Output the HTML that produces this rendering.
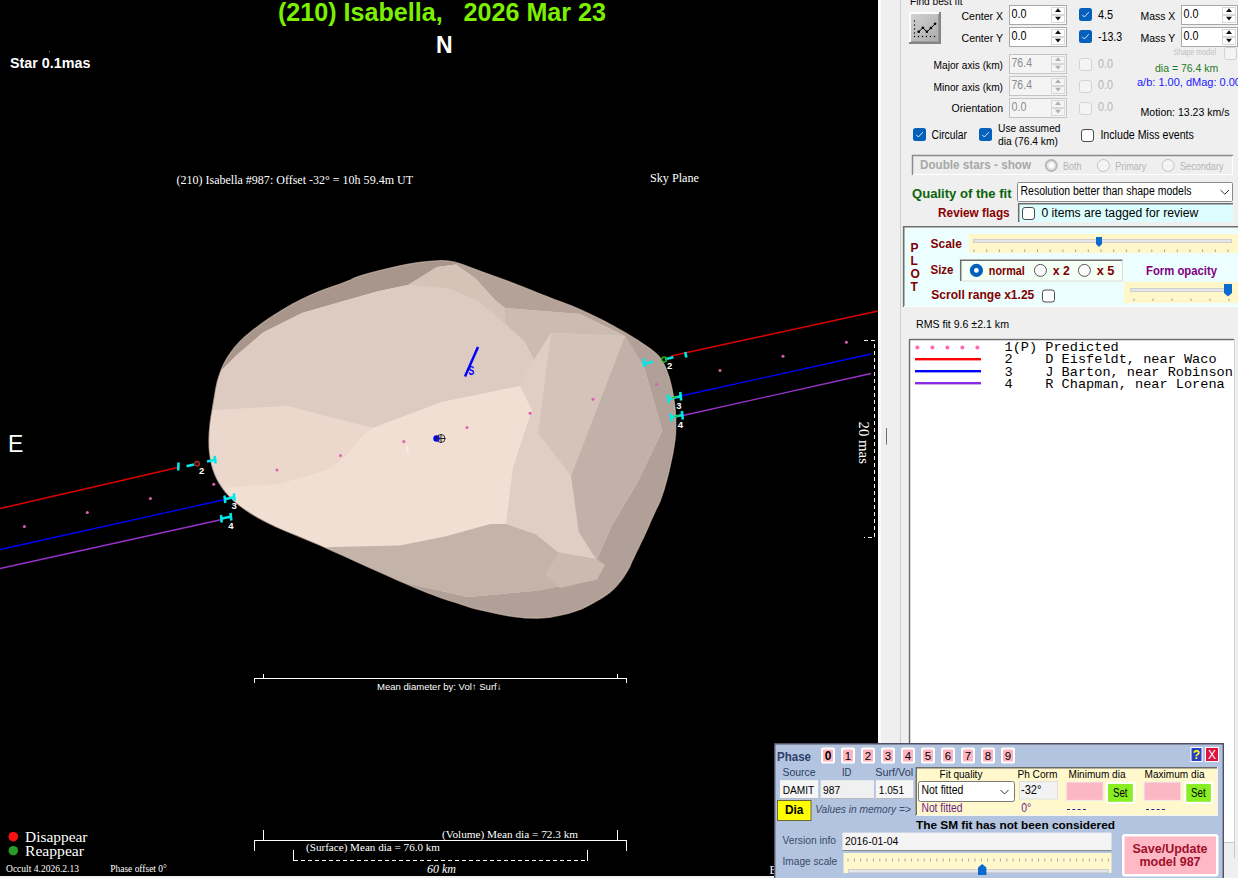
<!DOCTYPE html>
<html><head><meta charset="utf-8">
<style>
html,body{margin:0;padding:0;background:#000;width:1238px;height:878px;overflow:hidden}
svg{position:absolute;left:0;top:0;display:block}
text{font-family:"Liberation Sans",sans-serif}
.sf{font-family:"Liberation Serif",serif}
.mo{font-family:"Liberation Mono",monospace}
</style></head><body>
<svg width="1238" height="878" viewBox="0 0 1238 878">
<rect x="0" y="0" width="878" height="876" fill="#000"/>
<rect x="0" y="876" width="878" height="2" fill="#f2f2f2"/>
<g id="asteroid">
<polygon fill="#a69489" points="446.0,260.2 450.0,260.8 454.2,261.6 458.8,262.8 463.5,264.3 468.5,266.2 474.7,268.5 482.0,271.2 490.4,274.2 500.1,277.8 509.7,281.3 519.3,285.0 528.9,288.8 538.6,292.7 547.1,296.1 554.5,298.9 560.9,301.3 566.1,303.2 572.2,305.6 579.1,308.5 586.8,312.0 595.2,316.0 603.4,320.1 611.3,324.2 618.9,328.4 626.1,332.6 632.6,336.5 638.4,340.1 643.4,343.4 647.6,346.2 651.4,349.0 654.6,351.6 657.4,354.0 659.6,356.3 661.8,359.3 663.9,362.9 666.0,367.3 668.0,372.4 669.8,377.8 671.3,383.4 672.7,389.4 673.8,395.6 674.7,401.3 675.4,406.4 675.9,411.0 676.1,415.0 676.3,419.2 676.3,423.6 676.3,428.1 676.2,432.9 675.7,438.5 674.8,445.0 673.6,452.4 671.9,460.6 670.2,468.5 668.4,476.0 666.5,483.1 664.5,489.9 662.6,495.8 660.7,500.9 658.9,505.2 657.1,508.8 655.2,512.8 653.2,517.2 650.9,522.2 648.6,527.8 646.2,533.1 643.8,538.2 641.4,543.1 639.1,547.9 636.8,552.6 634.5,557.4 632.3,562.1 630.2,566.9 627.7,571.6 624.8,576.2 621.6,580.8 617.9,585.2 614.1,589.3 610.0,592.9 605.8,596.1 601.2,598.9 596.7,601.6 592.0,604.2 587.2,606.8 582.3,609.2 576.0,611.6 568.3,613.9 559.2,616.0 548.8,618.0 537.4,618.8 525.3,618.5 512.4,617.1 498.6,614.4 487.2,612.1 478.1,610.0 471.2,608.3 466.8,606.8 461.5,605.1 455.5,603.1 448.8,600.9 441.2,598.4 434.1,595.8 427.2,593.2 420.6,590.6 414.4,588.0 406.9,584.7 398.1,580.9 388.1,576.5 376.9,571.5 365.6,566.4 354.2,561.3 342.8,556.1 331.2,550.9 319.8,545.8 308.3,540.9 296.9,536.2 285.5,531.6 275.1,527.1 265.7,522.5 257.3,518.0 249.8,513.4 243.3,509.0 237.6,504.7 232.7,500.6 228.8,496.6 225.1,492.5 221.9,488.2 218.9,483.8 216.4,479.2 214.2,474.4 212.3,469.3 210.8,463.9 209.7,458.1 208.9,452.3 208.5,446.4 208.4,440.4 208.6,434.2 209.0,428.4 209.6,422.8 210.3,417.5 211.2,412.5 212.1,407.0 213.1,401.1 214.2,394.7 215.3,387.9 216.8,381.3 218.7,375.0 220.9,369.1 223.4,363.4 226.5,357.8 230.1,352.4 234.2,347.1 238.7,342.0 244.3,336.6 250.9,331.0 258.5,325.2 267.1,319.1 275.7,313.4 284.2,308.2 292.8,303.3 301.2,298.9 309.6,294.9 317.7,291.4 325.6,288.4 333.4,285.8 340.1,283.5 345.8,281.3 350.4,279.4 354.1,277.6 359.6,275.6 367.1,273.3 376.6,270.8 387.9,267.9 398.7,265.6 408.7,263.6 418.1,262.1 426.9,261.1 434.4,260.4 440.8,260.1"/>
<polygon fill="#e9d5c9" points="445.9,261.2 440.8,261.1 434.5,261.4 427.0,262.1 418.3,263.1 408.9,264.6 398.9,266.5 388.2,268.9 376.8,271.7 367.4,274.3 359.9,276.6 354.4,278.5 350.9,280.3 346.1,282.2 340.4,284.4 333.7,286.8 326.0,289.3 318.1,292.3 310.0,295.8 301.7,299.8 293.2,304.2 284.7,309.0 276.2,314.3 267.7,319.9 259.1,326.0 251.5,331.8 245.0,337.4 239.5,342.7 234.9,347.7 230.9,353.0 227.4,358.3 224.3,363.8 221.8,369.4 219.6,375.4 217.8,381.6 216.3,388.1 215.2,394.9 214.1,401.3 213.1,407.2 212.2,412.7 211.3,417.7 210.6,422.9 210.0,428.4 209.6,434.3 209.4,440.4 209.5,446.4 209.9,452.2 210.7,458.0 211.8,463.6 213.3,469.0 215.1,474.0 217.3,478.8 219.8,483.2 222.7,487.6 225.9,491.8 229.5,495.9 233.4,499.9 238.2,504.0 243.8,508.2 250.4,512.6 257.8,517.1 266.1,521.6 275.5,526.2 285.9,530.7 297.3,535.2 308.7,540.0 320.2,544.9 331.7,550.0 343.2,555.2 354.6,560.4 366.0,565.5 377.3,570.6 388.5,575.6 398.5,580.0 407.3,583.8 414.8,587.1 421.0,589.7 427.6,592.3 434.4,594.9 441.6,597.4 449.1,599.9 455.8,602.1 461.8,604.1 467.1,605.9 471.5,607.3 478.3,609.1 487.4,611.1 498.8,613.5 512.5,616.1 525.4,617.5 537.4,617.8 548.6,617.0 559.0,615.0 568.1,612.9 575.7,610.7 581.9,608.3 586.7,605.9 591.5,603.3 596.2,600.7 600.7,598.0 605.2,595.3 609.4,592.2 613.4,588.6 617.2,584.6 620.8,580.1 624.0,575.6 626.8,571.1 629.3,566.4 631.4,561.7 633.6,557.0 635.8,552.2 638.2,547.4 640.5,542.7 642.9,537.8 645.3,532.6 647.6,527.3 650.0,521.8 652.2,516.8 654.3,512.3 656.2,508.3 658.0,504.8 659.8,500.6 661.6,495.5 663.5,489.6 665.5,482.8 667.4,475.8 669.2,468.3 671.0,460.4 672.6,452.2 673.8,444.8 674.7,438.4 675.2,432.8 675.3,428.1 675.3,423.6 675.3,419.2 675.1,415.0 674.9,411.1 674.4,406.6 673.7,401.5 672.8,395.8 671.7,389.6 670.4,383.7 668.8,378.1 667.1,372.7 665.1,367.7 663.1,363.4 661.0,359.8 658.9,356.9 656.7,354.7 654.0,352.3 650.8,349.8 647.0,347.1 642.8,344.2 637.8,341.0 632.1,337.4 625.6,333.5 618.4,329.2 610.8,325.1 603.0,321.0 594.8,316.9 586.3,312.9 578.7,309.4 571.8,306.5 565.8,304.1 560.5,302.2 554.2,299.9 546.7,297.0 538.2,293.6 528.6,289.7 518.9,286.0 509.3,282.3 499.7,278.7 490.1,275.2 481.6,272.1 474.3,269.4 468.2,267.1 463.2,265.3 458.5,263.7 454.0,262.6 449.8,261.7"/>
<polygon fill="#a8968c" points="236.0,355.7 263.0,332.5 302.0,313.0 340.0,302.0 379.0,291.0 408.0,285.0 437.0,267.0 456.0,264.5 457.1,263.4 454.0,262.6 449.8,261.7 445.9,261.2 440.8,261.1 434.5,261.4 427.0,262.1 418.3,263.1 408.9,264.6 398.9,266.5 388.2,268.9 376.8,271.7 367.4,274.3 359.9,276.6 354.4,278.5 350.9,280.3 346.1,282.2 340.4,284.4 333.7,286.8 326.0,289.3 318.1,292.3 310.0,295.8 301.7,299.8 293.2,304.2 284.7,309.0 276.2,314.3 267.7,319.9 259.1,326.0 251.5,331.8 245.0,337.4 239.5,342.7 234.9,347.7 230.9,353.0 227.4,358.3 224.3,363.8 221.8,369.4 221.5,370.2"/>
<polygon fill="#b4a298" points="456.0,264.5 476.0,279.0 495.0,300.0 505.0,308.0 580.0,314.0 625.0,336.0 629.8,336.0 625.6,333.5 618.4,329.2 610.8,325.1 603.0,321.0 594.8,316.9 586.3,312.9 578.7,309.4 571.8,306.5 565.8,304.1 560.5,302.2 554.2,299.9 546.7,297.0 538.2,293.6 528.6,289.7 518.9,286.0 509.3,282.3 499.7,278.7 490.1,275.2 481.6,272.1 474.3,269.4 468.2,267.1 463.2,265.3 458.5,263.7 457.1,263.4"/>
<polygon fill="#b0a097" points="625.0,336.0 644.0,367.0 662.3,430.8 637.7,482.0 611.0,527.0 596.7,560.0 596.8,579.5 535.7,590.8 467.9,597.0 405.4,583.0 407.3,583.8 414.8,587.1 421.0,589.7 427.6,592.3 434.4,594.9 441.6,597.4 449.1,599.9 455.8,602.1 461.8,604.1 467.1,605.9 471.5,607.3 478.3,609.1 487.4,611.1 498.8,613.5 512.5,616.1 525.4,617.5 537.4,617.8 548.6,617.0 559.0,615.0 568.1,612.9 575.7,610.7 581.9,608.3 586.7,605.9 591.5,603.3 596.2,600.7 600.7,598.0 605.2,595.3 609.4,592.2 613.4,588.6 617.2,584.6 620.8,580.1 624.0,575.6 626.8,571.1 629.3,566.4 631.4,561.7 633.6,557.0 635.8,552.2 638.2,547.4 640.5,542.7 642.9,537.8 645.3,532.6 647.6,527.3 650.0,521.8 652.2,516.8 654.3,512.3 656.2,508.3 658.0,504.8 659.8,500.6 661.6,495.5 663.5,489.6 665.5,482.8 667.4,475.8 669.2,468.3 671.0,460.4 672.6,452.2 673.8,444.8 674.7,438.4 675.2,432.8 675.3,428.1 675.3,423.6 675.3,419.2 675.1,415.0 674.9,411.1 674.4,406.6 673.7,401.5 672.8,395.8 671.7,389.6 670.4,383.7 668.8,378.1 667.1,372.7 665.1,367.7 663.1,363.4 661.0,359.8 658.9,356.9 656.7,354.7 654.0,352.3 650.8,349.8 647.0,347.1 642.8,344.2 637.8,341.0 632.1,337.4 629.8,336.0"/>
<polygon fill="#d6c3b8" points="449.0,289.0 476.0,300.0 505.0,324.0 505.0,308.0 495.0,300.0 476.0,279.0 456.0,264.5 437.0,267.0 408.0,285.0"/>
<polygon fill="#cbbbb0" points="505.0,324.0 524.0,341.0 534.0,360.0 551.0,333.0 625.0,336.0 580.0,314.0 505.0,308.0"/>
<polygon fill="#ddcbc1" points="287.0,406.0 373.0,428.0 442.0,402.0 520.0,386.0 534.0,360.0 524.0,341.0 505.0,324.0 476.0,300.0 449.0,289.0 408.0,285.0 379.0,291.0 340.0,302.0 302.0,313.0 263.0,332.5 236.0,355.7 221.5,370.2 219.6,375.4 217.8,381.6 216.3,388.1 215.2,394.9 214.1,401.3 213.1,407.2 212.6,410.3"/>
<polygon fill="#ebd7cc" points="230.0,487.0 279.0,484.0 327.0,470.0 345.0,457.0 364.0,434.0 373.0,428.0 287.0,406.0 212.6,410.3 212.2,412.7 211.3,417.7 210.6,422.9 210.0,428.4 209.6,434.3 209.4,440.4 209.5,446.4 209.9,452.2 210.7,458.0 211.8,463.6 213.3,469.0 215.1,474.0 217.3,478.8 219.8,483.2 222.7,487.6 223.1,488.2"/>
<polygon fill="#f2dfd3" points="333.0,547.0 400.0,545.6 445.0,536.5 490.5,524.0 506.0,524.0 513.0,468.0 532.0,410.0 520.0,386.0 442.0,402.0 373.0,428.0 364.0,434.0 345.0,457.0 327.0,470.0 279.0,484.0 230.0,487.0 223.1,488.2 225.9,491.8 229.5,495.9 233.4,499.9 238.2,504.0 243.8,508.2 250.4,512.6 257.8,517.1 266.1,521.6 275.5,526.2 285.9,530.7 297.3,535.2 308.7,540.0 320.2,544.9 326.4,547.6"/>
<polygon fill="#e0cec4" points="532.0,410.0 513.0,468.0 506.0,524.0 535.7,534.3 558.3,552.4 596.8,559.2 578.7,532.0 571.0,476.0 538.0,433.0 551.0,333.0 534.0,360.0 520.0,386.0"/>
<polygon fill="#d5c3b9" points="538.0,433.0 571.0,476.0 586.0,437.0 625.0,336.0 551.0,333.0"/>
<polygon fill="#c2b1a8" points="586.0,437.0 571.0,476.0 578.7,532.0 596.7,560.0 611.0,527.0 637.7,482.0 662.3,430.8 644.0,367.0 625.0,336.0"/>
<polygon fill="#c4b3a9" points="467.9,597.0 535.7,590.8 596.8,579.5 605.0,565.0 596.8,559.2 558.3,552.4 535.7,534.3 506.0,524.0 490.5,524.0 445.0,536.5 400.0,545.6 333.0,547.0 326.4,547.6 331.7,550.0 343.2,555.2 354.6,560.4 366.0,565.5 377.3,570.6 388.5,575.6 398.5,580.0 405.4,583.0"/>
<polygon fill="#cbbab0" points="545.0,575.0 560.0,588.0 596.8,579.5 605.0,565.0 596.8,559.2 558.3,552.4"/>
</g>
<text x="278" y="21" font-size="25" fill="#7cf000" font-weight="bold" textLength="328" lengthAdjust="spacingAndGlyphs" xml:space="preserve">(210) Isabella,   2026 Mar 23</text>
<text x="436" y="53" font-size="23" fill="#fff" font-weight="bold" xml:space="preserve">N</text>
<text x="10" y="68" font-size="14.25" fill="#fff" font-weight="bold" textLength="80.5" lengthAdjust="spacingAndGlyphs" xml:space="preserve">Star 0.1mas</text>
<rect x="49" y="51" width="1" height="1" fill="#888"/>
<text x="8" y="452" font-size="23" fill="#fff" xml:space="preserve">E</text>
<text x="176.5" y="183.8" font-size="12" fill="#fff" class="sf" textLength="236.5" lengthAdjust="spacingAndGlyphs" xml:space="preserve">(210) Isabella #987: Offset -32° = 10h 59.4m UT</text>
<text x="650" y="182" font-size="12" fill="#fff" class="sf" textLength="49" lengthAdjust="spacingAndGlyphs" xml:space="preserve">Sky Plane</text>
<g id="chords">
<line x1="0" y1="508.5" x2="178" y2="467.5" stroke="#e00000" stroke-width="1.3"/>
<line x1="671" y1="356" x2="878" y2="311" stroke="#e00000" stroke-width="1.3"/>
<line x1="0" y1="549.5" x2="225" y2="499.5" stroke="#0000ff" stroke-width="1.3"/>
<line x1="681" y1="396" x2="871" y2="354" stroke="#0000ff" stroke-width="1.3"/>
<line x1="0" y1="568.5" x2="222" y2="519.5" stroke="#9932cc" stroke-width="1.3"/>
<line x1="683" y1="415.5" x2="871" y2="373.5" stroke="#9932cc" stroke-width="1.3"/>
<g fill="#e060b0"><circle cx="24.4" cy="526.5" r="1.5"/><circle cx="87.3" cy="512.4" r="1.5"/><circle cx="150.4" cy="498.5" r="1.5"/><circle cx="213.8" cy="484.3" r="1.5"/><circle cx="277" cy="470" r="1.5"/><circle cx="340.5" cy="455.5" r="1.5"/><circle cx="403.8" cy="441.5" r="1.5"/><circle cx="467" cy="427.6" r="1.5"/><circle cx="530" cy="413.2" r="1.5"/><circle cx="593" cy="399.2" r="1.5"/><circle cx="656.7" cy="384.5" r="1.5"/><circle cx="720" cy="370.5" r="1.5"/><circle cx="783" cy="356.3" r="1.5"/><circle cx="846.4" cy="342.3" r="1.5"/></g>
<g stroke="#00e8e8" stroke-width="2.6" stroke-linecap="butt">
<line x1="178.6" y1="462.5" x2="178.2" y2="470.5"/>
<line x1="186.5" y1="466.2" x2="194" y2="464.4"/>
<line x1="207" y1="461.6" x2="215" y2="459.8"/><line x1="214.6" y1="456" x2="215.6" y2="463.5"/>
<line x1="224.5" y1="499.3" x2="234.7" y2="497"/><line x1="224.5" y1="495.5" x2="225.3" y2="503"/><line x1="233.8" y1="493.5" x2="234.6" y2="501"/>
<line x1="221" y1="518.7" x2="231.3" y2="516.5"/><line x1="221" y1="515" x2="221.8" y2="522.5"/><line x1="230.5" y1="513" x2="231.3" y2="520.5"/>
<line x1="643.5" y1="364" x2="652.8" y2="361.8"/><line x1="643.4" y1="358.5" x2="644.4" y2="367"/>
<line x1="665" y1="359.3" x2="673.4" y2="357.2"/>
<line x1="685.3" y1="352" x2="686.3" y2="357.5"/>
<line x1="668" y1="398.9" x2="681" y2="396.2"/><line x1="668" y1="394.5" x2="669" y2="403"/><line x1="680.2" y1="392" x2="681.2" y2="400.5"/>
<line x1="670.7" y1="417.6" x2="682.6" y2="415.1"/><line x1="670.7" y1="413.5" x2="671.7" y2="421.5"/><line x1="681.8" y1="411" x2="682.8" y2="419.5"/>
</g>
<g stroke="#30c030" stroke-width="1.6"><line x1="672" y1="397.8" x2="677" y2="396.8"/><line x1="674.5" y1="416.7" x2="679" y2="415.8"/></g>
<circle cx="197.1" cy="463.8" r="2.3" fill="none" stroke="#b03020" stroke-width="1.3"/>
<circle cx="664.2" cy="359.5" r="2.4" fill="none" stroke="#20b020" stroke-width="1.5"/>
<g fill="#fff" font-size="9.5" font-weight="bold">
<text x="199" y="474">2</text><text x="231.6" y="509.4">3</text><text x="228.2" y="528.8">4</text>
<text x="667" y="368.6">2</text><text x="676.2" y="408.6">3</text><text x="677.8" y="427.6">4</text>
</g>
<line x1="478" y1="347" x2="465" y2="376.5" stroke="#0000ff" stroke-width="2.5"/>
<text x="468.5" y="374.6" font-size="12" font-weight="bold" fill="#0000ff" textLength="5.8" lengthAdjust="spacingAndGlyphs">S</text>
<circle cx="436.5" cy="438.5" r="3.2" fill="#0000ff"/>
<circle cx="441" cy="438.5" r="4" fill="none" stroke="#333" stroke-width="1"/>
<line x1="441" y1="434" x2="441" y2="443" stroke="#222" stroke-width="1"/>
<line x1="436.5" y1="438.5" x2="445.5" y2="438.5" stroke="#222" stroke-width="1"/>
<text x="405" y="452" font-size="9" fill="#fff" opacity="0.7">1</text>
</g>
<g id="scales" stroke="#fff" stroke-width="1" fill="none" shape-rendering="crispEdges">
<path d="M254.5,683 V678.5 H626.5 V683 M263.5,674 V678.5 M617.5,674 V678.5"/>
<path d="M254.5,851 V840.5 H626.5 V851 M263.5,830 V840.5 M617.5,830 V840.5"/>
<path d="M293.5,850 V860.5 M587.5,850 V860.5"/><path d="M294,860.5 H587" stroke-dasharray="4,3"/>
<path d="M864,340.5 H874.5 V537.5 H864" stroke-dasharray="4,3"/>
</g>
<text x="377" y="690" font-size="9.5" fill="#fff" textLength="124.5" lengthAdjust="spacingAndGlyphs" xml:space="preserve">Mean diameter by: Vol↑ Surf↓</text>
<text x="442" y="838" font-size="11.25" fill="#fff" class="sf" textLength="136" lengthAdjust="spacingAndGlyphs" xml:space="preserve">(Volume) Mean dia = 72.3 km</text>
<text x="306" y="851" font-size="11" fill="#fff" class="sf" textLength="134" lengthAdjust="spacingAndGlyphs" xml:space="preserve">(Surface) Mean dia = 76.0 km</text>
<text x="427" y="873" font-size="12" fill="#fff" font-style="italic" class="sf" textLength="29" lengthAdjust="spacingAndGlyphs" xml:space="preserve">60 km</text>
<text class="sf" x="0" y="0" font-size="15" fill="#fff" transform="translate(858.5,421.5) rotate(90)" textLength="42.5" lengthAdjust="spacingAndGlyphs">20 mas</text>
<circle cx="13.3" cy="836.7" r="4.8" fill="#ff1010"/><circle cx="13.3" cy="850.7" r="4.8" fill="#2a9a2a"/>
<text x="25" y="841.5" font-size="14" fill="#fff" class="sf" textLength="62.5" lengthAdjust="spacingAndGlyphs" xml:space="preserve">Disappear</text>
<text x="25" y="855.6" font-size="14" fill="#fff" class="sf" textLength="59" lengthAdjust="spacingAndGlyphs" xml:space="preserve">Reappear</text>
<text x="6" y="871.8" font-size="9.5" fill="#fff" class="sf" textLength="73" lengthAdjust="spacingAndGlyphs" xml:space="preserve">Occult 4.2026.2.13</text>
<text x="110.3" y="871.8" font-size="9.5" fill="#fff" class="sf" textLength="56.5" lengthAdjust="spacingAndGlyphs" xml:space="preserve">Phase offset 0°</text>
<text x="769.5" y="873.7" font-size="11.5" fill="#fff" class="sf" xml:space="preserve">E</text>
<g id="panel">
<rect x="878" y="0" width="360" height="878" fill="#efefef"/>
<rect x="878" y="0" width="3" height="878" fill="#fcfcfc"/>
<rect x="900" y="0" width="1" height="878" fill="#cdcdcd"/><rect x="886" y="428" width="1" height="16.5" fill="#707070"/>
<text x="910" y="4.5" font-size="11.5" fill="#000" textLength="52.5" lengthAdjust="spacingAndGlyphs" xml:space="preserve">Find best fit</text>
<defs><linearGradient id="bg1" x1="0" y1="0" x2="1" y2="1"><stop offset="0" stop-color="#d2d2d2"/><stop offset="1" stop-color="#acacac"/></linearGradient></defs>
<rect x="909" y="12" width="32" height="32" fill="#858585"/><rect x="909" y="12" width="30" height="30" fill="#fcfcfc"/><rect x="911" y="14" width="28" height="28" fill="#9a9a9a"/><rect x="911" y="14" width="27" height="27" fill="url(#bg1)"/>
<g fill="#000"><circle cx="914.5" cy="21" r="0.7"/><circle cx="914.5" cy="25" r="0.7"/><circle cx="914.5" cy="29" r="0.7"/><circle cx="914.5" cy="33" r="0.7"/><circle cx="914.5" cy="36.5" r="0.7"/><circle cx="918.5" cy="36.5" r="0.7"/><circle cx="922.5" cy="36.5" r="0.7"/><circle cx="926.5" cy="36.5" r="0.7"/><circle cx="930.5" cy="36.5" r="0.7"/><circle cx="934.5" cy="36.5" r="0.7"/>
<polyline points="918.7,31.8 922.9,27.7 926.9,31.8 930.9,28 935.1,23.8" fill="none" stroke="#000" stroke-width="1"/><circle cx="918.7" cy="31.8" r="1.3"/><circle cx="922.9" cy="27.7" r="1.3"/><circle cx="926.9" cy="31.8" r="1.3"/><circle cx="930.9" cy="28" r="1.3"/><circle cx="935.1" cy="23.8" r="1.3"/></g>
<text x="1003" y="19.6" font-size="11.5" fill="#000" text-anchor="end" textLength="41.5" lengthAdjust="spacingAndGlyphs" xml:space="preserve">Center X</text>
<text x="1003" y="41.5" font-size="11.5" fill="#000" text-anchor="end" textLength="41.5" lengthAdjust="spacingAndGlyphs" xml:space="preserve">Center Y</text>
<text x="1003" y="68.6" font-size="11.5" fill="#000" text-anchor="end" textLength="69.5" lengthAdjust="spacingAndGlyphs" xml:space="preserve">Major axis (km)</text>
<text x="1003" y="90.5" font-size="11.5" fill="#000" text-anchor="end" textLength="69.5" lengthAdjust="spacingAndGlyphs" xml:space="preserve">Minor axis (km)</text>
<text x="1003" y="111.5" font-size="11.5" fill="#000" text-anchor="end" textLength="51.5" lengthAdjust="spacingAndGlyphs" xml:space="preserve">Orientation</text>
<rect x="1009.5" y="5.5" width="57" height="19" fill="#fff" stroke="#a8a8a8"/>
<rect x="1051.5" y="7.5" width="13" height="7.0" fill="#fff" stroke="#d8d8d8" stroke-width="1"/>
<rect x="1051.5" y="15.5" width="13" height="7.0" fill="#fff" stroke="#d8d8d8" stroke-width="1"/>
<path d="M1055,12 L1058,8.3 L1061,12 Z M1055,16.7 L1058,20.4 L1061,16.7 Z" fill="#111"/>
<text x="1011.5" y="17.5" font-size="12" fill="#000" textLength="15" lengthAdjust="spacingAndGlyphs" xml:space="preserve">0.0</text>
<rect x="1009.5" y="27.5" width="57" height="19" fill="#fff" stroke="#a8a8a8"/>
<rect x="1051.5" y="29.5" width="13" height="7.0" fill="#fff" stroke="#d8d8d8" stroke-width="1"/>
<rect x="1051.5" y="37.5" width="13" height="7.0" fill="#fff" stroke="#d8d8d8" stroke-width="1"/>
<path d="M1055,34 L1058,30.3 L1061,34 Z M1055,38.7 L1058,42.4 L1061,38.7 Z" fill="#111"/>
<text x="1011.5" y="39.5" font-size="12" fill="#000" textLength="15" lengthAdjust="spacingAndGlyphs" xml:space="preserve">0.0</text>
<rect x="1009.5" y="54.5" width="57" height="19" fill="#f4f4f4" stroke="#c4c4c4"/>
<rect x="1051.5" y="56.5" width="13" height="7.0" fill="#f4f4f4" stroke="#d8d8d8" stroke-width="1"/>
<rect x="1051.5" y="64.5" width="13" height="7.0" fill="#f4f4f4" stroke="#d8d8d8" stroke-width="1"/>
<path d="M1055,61 L1058,57.3 L1061,61 Z M1055,65.7 L1058,69.4 L1061,65.7 Z" fill="#b0b0b0"/>
<text x="1011.5" y="66.5" font-size="12" fill="#8c8c8c" textLength="20.5" lengthAdjust="spacingAndGlyphs" xml:space="preserve">76.4</text>
<rect x="1009.5" y="76.5" width="57" height="19" fill="#f4f4f4" stroke="#c4c4c4"/>
<rect x="1051.5" y="78.5" width="13" height="7.0" fill="#f4f4f4" stroke="#d8d8d8" stroke-width="1"/>
<rect x="1051.5" y="86.5" width="13" height="7.0" fill="#f4f4f4" stroke="#d8d8d8" stroke-width="1"/>
<path d="M1055,83 L1058,79.3 L1061,83 Z M1055,87.7 L1058,91.4 L1061,87.7 Z" fill="#b0b0b0"/>
<text x="1011.5" y="88.5" font-size="12" fill="#8c8c8c" textLength="20.5" lengthAdjust="spacingAndGlyphs" xml:space="preserve">76.4</text>
<rect x="1009.5" y="98.5" width="57" height="19" fill="#f4f4f4" stroke="#c4c4c4"/>
<rect x="1051.5" y="100.5" width="13" height="7.0" fill="#f4f4f4" stroke="#d8d8d8" stroke-width="1"/>
<rect x="1051.5" y="108.5" width="13" height="7.0" fill="#f4f4f4" stroke="#d8d8d8" stroke-width="1"/>
<path d="M1055,105 L1058,101.3 L1061,105 Z M1055,109.7 L1058,113.4 L1061,109.7 Z" fill="#b0b0b0"/>
<text x="1011.5" y="110.5" font-size="12" fill="#8c8c8c" textLength="15" lengthAdjust="spacingAndGlyphs" xml:space="preserve">0.0</text>
<rect x="1079" y="8" width="13" height="13" rx="2.5" fill="#0560bc"/><path d="M1082.2,14.8 L1084.4,17 L1088.8,12.2" stroke="#e6eef8" stroke-width="0.95" fill="none"/>
<rect x="1079" y="30" width="13" height="13" rx="2.5" fill="#0560bc"/><path d="M1082.2,36.8 L1084.4,39 L1088.8,34.2" stroke="#e6eef8" stroke-width="0.95" fill="none"/>
<rect x="1079.5" y="58.5" width="12" height="12" rx="2.5" fill="#f4f4f4" stroke="#d4d4d4" stroke-width="1"/>
<rect x="1079.5" y="80.5" width="12" height="12" rx="2.5" fill="#f4f4f4" stroke="#d4d4d4" stroke-width="1"/>
<rect x="1079.5" y="102.5" width="12" height="12" rx="2.5" fill="#f4f4f4" stroke="#d4d4d4" stroke-width="1"/>
<text x="1098" y="18.8" font-size="12" fill="#000" textLength="15.2" lengthAdjust="spacingAndGlyphs" xml:space="preserve">4.5</text>
<text x="1098" y="40.5" font-size="12" fill="#000" textLength="24.2" lengthAdjust="spacingAndGlyphs" xml:space="preserve">-13.3</text>
<text x="1098" y="67.8" font-size="12" fill="#b4b4b4" textLength="15" lengthAdjust="spacingAndGlyphs" xml:space="preserve">0.0</text>
<text x="1098" y="89.3" font-size="12" fill="#b4b4b4" textLength="15" lengthAdjust="spacingAndGlyphs" xml:space="preserve">0.0</text>
<text x="1098" y="110.8" font-size="12" fill="#b4b4b4" textLength="15" lengthAdjust="spacingAndGlyphs" xml:space="preserve">0.0</text>
<text x="1140.5" y="19.5" font-size="11.5" fill="#000" textLength="34.8" lengthAdjust="spacingAndGlyphs" xml:space="preserve">Mass X</text>
<text x="1140.5" y="41.7" font-size="11.5" fill="#000" textLength="34.8" lengthAdjust="spacingAndGlyphs" xml:space="preserve">Mass Y</text>
<rect x="1181.5" y="5.5" width="56" height="19" fill="#fff" stroke="#a8a8a8"/>
<rect x="1222.5" y="7.5" width="13" height="7.0" fill="#fff" stroke="#d8d8d8" stroke-width="1"/>
<rect x="1222.5" y="15.5" width="13" height="7.0" fill="#fff" stroke="#d8d8d8" stroke-width="1"/>
<path d="M1226,12 L1229,8.3 L1232,12 Z M1226,16.7 L1229,20.4 L1232,16.7 Z" fill="#111"/>
<text x="1183.5" y="17.5" font-size="12" fill="#000" textLength="15" lengthAdjust="spacingAndGlyphs" xml:space="preserve">0.0</text>
<rect x="1181.5" y="27.5" width="56" height="19" fill="#fff" stroke="#a8a8a8"/>
<rect x="1222.5" y="29.5" width="13" height="7.0" fill="#fff" stroke="#d8d8d8" stroke-width="1"/>
<rect x="1222.5" y="37.5" width="13" height="7.0" fill="#fff" stroke="#d8d8d8" stroke-width="1"/>
<path d="M1226,34 L1229,30.3 L1232,34 Z M1226,38.7 L1229,42.4 L1232,38.7 Z" fill="#111"/>
<text x="1183.5" y="39.5" font-size="12" fill="#000" textLength="15" lengthAdjust="spacingAndGlyphs" xml:space="preserve">0.0</text>
<text x="1216" y="54.5" font-size="8.3" fill="#c0c0c0" text-anchor="end" textLength="42.5" lengthAdjust="spacingAndGlyphs" xml:space="preserve">Shape model</text>
<rect x="1224.5" y="47.5" width="12" height="12" rx="2.5" fill="#f4f4f4" stroke="#d4d4d4" stroke-width="1"/>
<text x="1155" y="71.6" font-size="11.5" fill="#1e7a1e" textLength="63.2" lengthAdjust="spacingAndGlyphs" xml:space="preserve">dia = 76.4 km</text>
<text x="1137" y="85.5" font-size="11.5" fill="#2020ff" textLength="104" lengthAdjust="spacingAndGlyphs" xml:space="preserve">a/b: 1.00, dMag: 0.00</text>
<text x="1140.5" y="115.7" font-size="11.5" fill="#000" textLength="89" lengthAdjust="spacingAndGlyphs" xml:space="preserve">Motion: 13.23 km/s</text>
<rect x="913" y="128" width="13" height="13" rx="2.5" fill="#0560bc"/><path d="M916.2,134.8 L918.4,137 L922.8,132.2" stroke="#e6eef8" stroke-width="0.95" fill="none"/>
<text x="931.5" y="138.6" font-size="12" fill="#000" textLength="35.3" lengthAdjust="spacingAndGlyphs" xml:space="preserve">Circular</text>
<rect x="979" y="128" width="13" height="13" rx="2.5" fill="#0560bc"/><path d="M982.2,134.8 L984.4,137 L988.8,132.2" stroke="#e6eef8" stroke-width="0.95" fill="none"/>
<text x="998" y="131.8" font-size="11.5" fill="#000" textLength="62.5" lengthAdjust="spacingAndGlyphs" xml:space="preserve">Use assumed</text>
<text x="998" y="144.9" font-size="11.5" fill="#000" textLength="60" lengthAdjust="spacingAndGlyphs" xml:space="preserve">dia (76.4 km)</text>
<rect x="1081.5" y="129.5" width="12" height="12" rx="2.5" fill="#fff" stroke="#4a4a4a" stroke-width="1"/>
<text x="1100.4" y="139.1" font-size="12" fill="#000" textLength="93.5" lengthAdjust="spacingAndGlyphs" xml:space="preserve">Include Miss events</text>
<rect x="912" y="155" width="321" height="20" fill="#efefef"/><path d="M912.5,175 V155.5 H1233" stroke="#8a8a8a" stroke-width="1.5" fill="none"/><path d="M913,174.5 H1232.5 V156" stroke="#fff" stroke-width="1" fill="none"/>
<text x="920" y="169" font-size="12.5" fill="#a8a8a8" font-weight="bold" textLength="111" lengthAdjust="spacingAndGlyphs" xml:space="preserve">Double stars - show</text>
<circle cx="1051.3" cy="165.5" r="5.5" fill="#e8e8e8" stroke="#b8b8b8" stroke-width="2"/><circle cx="1051.3" cy="165.5" r="2.5" fill="#fff"/>
<text x="1063" y="170" font-size="11.5" fill="#b4b4b4" textLength="18.5" lengthAdjust="spacingAndGlyphs" xml:space="preserve">Both</text>
<circle cx="1103.4" cy="165.5" r="6" fill="#f4f4f4" stroke="#c4c4c4" stroke-width="1"/>
<text x="1115.3" y="170" font-size="11.5" fill="#b4b4b4" textLength="31" lengthAdjust="spacingAndGlyphs" xml:space="preserve">Primary</text>
<circle cx="1168.1" cy="165.5" r="6" fill="#f4f4f4" stroke="#c4c4c4" stroke-width="1"/>
<text x="1180" y="170" font-size="11.5" fill="#b4b4b4" textLength="43.5" lengthAdjust="spacingAndGlyphs" xml:space="preserve">Secondary</text>
<text x="912" y="197.8" font-size="13" fill="#0a640a" font-weight="bold" textLength="99.5" lengthAdjust="spacingAndGlyphs" xml:space="preserve">Quality of the fit</text>
<rect x="1017.5" y="182.5" width="215" height="19" rx="1" fill="#fff" stroke="#8a8a8a"/><path d="M1220.5,190 L1224.8,194.2 L1229,190" stroke="#333" stroke-width="1" fill="none"/>
<text x="1020.5" y="195.3" font-size="12" fill="#000" textLength="171" lengthAdjust="spacingAndGlyphs" xml:space="preserve">Resolution better than shape models</text>
<text x="938" y="217.4" font-size="12.5" fill="#8b0000" font-weight="bold" textLength="71.7" lengthAdjust="spacingAndGlyphs" xml:space="preserve">Review flags</text>
<rect x="1018" y="203" width="215" height="19" fill="#dcfefe"/><path d="M1018.7,222 V203.7 H1233" stroke="#6c6c6c" stroke-width="1.5" fill="none"/>
<rect x="1022.5" y="207.5" width="12" height="12" rx="2.5" fill="#fff" stroke="#4a4a4a" stroke-width="1"/>
<text x="1041.4" y="217.2" font-size="12.5" fill="#000" textLength="157" lengthAdjust="spacingAndGlyphs" xml:space="preserve">0 items are tagged for review</text>
<rect x="903" y="226" width="335" height="81" fill="#ecfefe"/><path d="M903.7,307 V226.7 H1238" stroke="#6e6e6e" stroke-width="1.6" fill="none"/><path d="M904,306.5 H1238" stroke="#fff" stroke-width="1" fill="none"/>
<text x="910.5" y="252" font-size="12" fill="#800000" font-weight="bold" xml:space="preserve">P</text>
<text x="910.5" y="265" font-size="12" fill="#800000" font-weight="bold" xml:space="preserve">L</text>
<text x="910.5" y="277.5" font-size="12" fill="#800000" font-weight="bold" xml:space="preserve">O</text>
<text x="910.5" y="290.5" font-size="12" fill="#800000" font-weight="bold" xml:space="preserve">T</text>
<text x="930.5" y="247.8" font-size="12.5" fill="#800000" font-weight="bold" textLength="31.3" lengthAdjust="spacingAndGlyphs" xml:space="preserve">Scale</text>
<rect x="969" y="234" width="269" height="19" fill="#fff7ca"/><rect x="973.5" y="239.5" width="258" height="3" fill="#e6e6e6" stroke="#cfcfcf" stroke-width="1"/>
<path d="M974.0,249.5 V252M986.7,249.5 V252M999.4,249.5 V252M1012.1,249.5 V252M1024.8,249.5 V252M1037.5,249.5 V252M1050.2,249.5 V252M1062.9,249.5 V252M1075.6,249.5 V252M1088.3,249.5 V252M1101.0,249.5 V252M1113.7,249.5 V252M1126.4,249.5 V252M1139.1,249.5 V252M1151.8,249.5 V252M1164.5,249.5 V252M1177.2,249.5 V252M1189.9,249.5 V252M1202.6,249.5 V252M1215.3,249.5 V252M1228.0,249.5 V252" stroke="#a0a0a0" stroke-width="1" fill="none"/>
<path d="M1096,237 H1102 V244 L1099,247 L1096,244 Z" fill="#0a6ad0"/>
<text x="930.5" y="273.7" font-size="12.5" fill="#800000" font-weight="bold" textLength="23" lengthAdjust="spacingAndGlyphs" xml:space="preserve">Size</text>
<rect x="960" y="259.5" width="163" height="22" fill="#f4fff6"/><path d="M960.7,281 V260.2 H1122.5" stroke="#6e6e6e" stroke-width="1.5" fill="none"/><path d="M961,281 H1122.5 V260.5" stroke="#dcdcdc" stroke-width="1" fill="none"/>
<circle cx="976.4" cy="270.4" r="4.5" fill="#fff" stroke="#0560bc" stroke-width="4.2"/>
<text x="988.8" y="274.5" font-size="12.5" fill="#800000" font-weight="bold" textLength="36" lengthAdjust="spacingAndGlyphs" xml:space="preserve">normal</text>
<circle cx="1040.4" cy="270.4" r="6" fill="#fbfbfb" stroke="#555" stroke-width="1"/>
<text x="1052.7" y="274.5" font-size="12.5" fill="#800000" font-weight="bold" textLength="17" lengthAdjust="spacingAndGlyphs" xml:space="preserve">x 2</text>
<circle cx="1084.4" cy="270.4" r="6" fill="#fbfbfb" stroke="#555" stroke-width="1"/>
<text x="1096.7" y="274.5" font-size="12.5" fill="#800000" font-weight="bold" textLength="17.8" lengthAdjust="spacingAndGlyphs" xml:space="preserve">x 5</text>
<text x="1146" y="274.6" font-size="12" fill="#800080" font-weight="bold" textLength="71" lengthAdjust="spacingAndGlyphs" xml:space="preserve">Form opacity</text>
<rect x="1124" y="282" width="114" height="21" fill="#fff7ca"/><rect x="1130.5" y="288.5" width="101" height="3" fill="#e6e6e6" stroke="#cfcfcf" stroke-width="1"/>
<path d="M1134.0,298.5 V301M1153.0,298.5 V301M1172.0,298.5 V301M1191.0,298.5 V301M1210.0,298.5 V301M1229.0,298.5 V301" stroke="#a0a0a0" stroke-width="1" fill="none"/>
<path d="M1224,284 H1232 V293 L1228,296.5 L1224,293 Z" fill="#0a6ad0"/>
<text x="931.3" y="299.2" font-size="12.5" fill="#800000" font-weight="bold" textLength="103" lengthAdjust="spacingAndGlyphs" xml:space="preserve">Scroll range x1.25</text>
<rect x="1042.5" y="290.0" width="12" height="12" rx="2.5" fill="#fff" stroke="#4a4a4a" stroke-width="1"/>
<text x="916" y="328.3" font-size="11.5" fill="#000" textLength="93" lengthAdjust="spacingAndGlyphs" xml:space="preserve">RMS fit 9.6 ±2.1 km</text>
<rect x="908" y="338" width="327" height="504" fill="#fff"/><path d="M909.5,842 V339.5 H1234" stroke="#6a6a6a" stroke-width="1.5" fill="none"/><path d="M1234.5,339 V842" stroke="#d4d4d4" stroke-width="1" fill="none"/><path d="M1224,842.5 H1234.5 V858" stroke="#c8c8c8" stroke-width="1" fill="none"/>
<g fill="#ff69b4"><circle cx="917.4" cy="347.5" r="2"/><circle cx="932.4" cy="347.5" r="2"/><circle cx="947.4" cy="347.5" r="2"/><circle cx="962.4" cy="347.5" r="2"/><circle cx="977.4" cy="347.5" r="2"/></g>
<rect x="915" y="358" width="66" height="2.4" fill="#ff0000"/><rect x="915" y="370" width="66" height="2.4" fill="#0000ff"/><rect x="915" y="382" width="66" height="2.4" fill="#8a2be2"/>
<text x="1004.5" y="351.3" font-size="13.6" fill="#000" class="mo" xml:space="preserve">1(P) Predicted</text>
<text x="1004.5" y="363.4" font-size="13.6" fill="#000" class="mo" xml:space="preserve">2    D Eisfeldt, near Waco</text>
<text x="1004.5" y="375.5" font-size="13.6" fill="#000" class="mo" xml:space="preserve">3    J Barton, near Robinson</text>
<text x="1004.5" y="387.6" font-size="13.6" fill="#000" class="mo" xml:space="preserve">4    R Chapman, near Lorena</text>
</g>
<g id="phase">
<rect x="774" y="743" width="450" height="135" fill="#b2c4df"/><path d="M774.7,878 V743.7 H1223.3 V878" stroke="#505060" stroke-width="1.4" fill="none"/>
<text x="777" y="760.6" font-size="13" fill="#2c3e6a" font-weight="bold" textLength="34" lengthAdjust="spacingAndGlyphs" xml:space="preserve">Phase</text>
<rect x="821" y="747.5" width="14" height="16" rx="2" fill="#fff"/><rect x="823" y="749.5" width="10" height="12" fill="#ffb4c0"/>
<text x="828" y="760" font-size="12" fill="#000" font-weight="bold" text-anchor="middle" xml:space="preserve">0</text>
<rect x="841" y="747.5" width="14" height="16" rx="2" fill="#fff"/><rect x="843" y="749.5" width="10" height="12" fill="#ffb4c0"/>
<text x="848" y="760" font-size="11.5" fill="#000" text-anchor="middle" xml:space="preserve">1</text>
<rect x="861" y="747.5" width="14" height="16" rx="2" fill="#fff"/><rect x="863" y="749.5" width="10" height="12" fill="#ffb4c0"/>
<text x="868" y="760" font-size="11.5" fill="#000" text-anchor="middle" xml:space="preserve">2</text>
<rect x="881" y="747.5" width="14" height="16" rx="2" fill="#fff"/><rect x="883" y="749.5" width="10" height="12" fill="#ffb4c0"/>
<text x="888" y="760" font-size="11.5" fill="#000" text-anchor="middle" xml:space="preserve">3</text>
<rect x="901" y="747.5" width="14" height="16" rx="2" fill="#fff"/><rect x="903" y="749.5" width="10" height="12" fill="#ffb4c0"/>
<text x="908" y="760" font-size="11.5" fill="#000" text-anchor="middle" xml:space="preserve">4</text>
<rect x="921" y="747.5" width="14" height="16" rx="2" fill="#fff"/><rect x="923" y="749.5" width="10" height="12" fill="#ffb4c0"/>
<text x="928" y="760" font-size="11.5" fill="#000" text-anchor="middle" xml:space="preserve">5</text>
<rect x="941" y="747.5" width="14" height="16" rx="2" fill="#fff"/><rect x="943" y="749.5" width="10" height="12" fill="#ffb4c0"/>
<text x="948" y="760" font-size="11.5" fill="#000" text-anchor="middle" xml:space="preserve">6</text>
<rect x="961" y="747.5" width="14" height="16" rx="2" fill="#fff"/><rect x="963" y="749.5" width="10" height="12" fill="#ffb4c0"/>
<text x="968" y="760" font-size="11.5" fill="#000" text-anchor="middle" xml:space="preserve">7</text>
<rect x="981" y="747.5" width="14" height="16" rx="2" fill="#fff"/><rect x="983" y="749.5" width="10" height="12" fill="#ffb4c0"/>
<text x="988" y="760" font-size="11.5" fill="#000" text-anchor="middle" xml:space="preserve">8</text>
<rect x="1001" y="747.5" width="14" height="16" rx="2" fill="#fff"/><rect x="1003" y="749.5" width="10" height="12" fill="#ffb4c0"/>
<text x="1008" y="760" font-size="11.5" fill="#000" text-anchor="middle" xml:space="preserve">9</text>
<rect x="1190.5" y="747" width="12" height="15" fill="#fff"/><rect x="1191.5" y="748" width="10" height="13" fill="#2a3ec8"/>
<text x="1196.5" y="759" font-size="12" fill="#ffff00" font-weight="bold" text-anchor="middle" xml:space="preserve">?</text>
<rect x="1205" y="747" width="14" height="15" fill="#fff"/><rect x="1206" y="748" width="12" height="13" fill="#dc143c"/>
<text x="1212" y="759" font-size="12" fill="#fff" text-anchor="middle" xml:space="preserve">X</text>
<text x="782.5" y="776.3" font-size="11.5" fill="#2c3e60" textLength="33" lengthAdjust="spacingAndGlyphs" xml:space="preserve">Source</text>
<text x="841.9" y="776.3" font-size="11.5" fill="#2c3e60" textLength="9.5" lengthAdjust="spacingAndGlyphs" xml:space="preserve">ID</text>
<text x="875.2" y="776.3" font-size="11.5" fill="#2c3e60" textLength="38" lengthAdjust="spacingAndGlyphs" xml:space="preserve">Surf/Vol</text>
<rect x="780" y="780.2" width="38.2" height="18.2" fill="#f6f6f6"/><rect x="820.6" y="780.2" width="53.4" height="18.2" fill="#f0f0f0"/><rect x="875.8" y="780.2" width="37.5" height="18.2" fill="#f6f6f6"/>
<path d="M780,798.5 H818.2 M820.6,798.5 H874 M875.8,798.5 H913.3" stroke="#b8b8c0" stroke-width="1"/>
<text x="782.7" y="793.7" font-size="11.5" fill="#000" textLength="31.5" lengthAdjust="spacingAndGlyphs" xml:space="preserve">DAMIT</text>
<text x="823.1" y="793.7" font-size="11.5" fill="#000" textLength="17.2" lengthAdjust="spacingAndGlyphs" xml:space="preserve">987</text>
<text x="878.8" y="793.7" font-size="11.5" fill="#000" textLength="25.2" lengthAdjust="spacingAndGlyphs" xml:space="preserve">1.051</text>
<rect x="777.5" y="800.5" width="33.5" height="20" fill="#ffff00" stroke="#6a6a30" stroke-width="1"/>
<text x="784.9" y="814.4" font-size="12.5" fill="#000" font-weight="bold" textLength="18.5" lengthAdjust="spacingAndGlyphs" xml:space="preserve">Dia</text>
<text x="815.2" y="812.6" font-size="11.5" fill="#3c4a6a" font-style="italic" textLength="95.7" lengthAdjust="spacingAndGlyphs" xml:space="preserve">Values in memory =&gt;</text>
<rect x="915.5" y="767" width="302" height="49" fill="#fff8cc"/><path d="M916.2,816 V767.7 H1217.5" stroke="#6a6a6a" stroke-width="1.5" fill="none"/><path d="M916,815.5 H1217.5 V767" stroke="#f4f4f4" stroke-width="1" fill="none"/>
<text x="939.6" y="777.6" font-size="11.5" fill="#000" textLength="42.8" lengthAdjust="spacingAndGlyphs" xml:space="preserve">Fit quality</text>
<rect x="918.5" y="781.5" width="96" height="20" rx="2" fill="#fff" stroke="#7a7a7a"/><path d="M1000.5,790 L1004.5,794 L1008.5,790" stroke="#333" fill="none"/>
<text x="921.5" y="794.4" font-size="12" fill="#000" textLength="41.8" lengthAdjust="spacingAndGlyphs" xml:space="preserve">Not fitted</text>
<text x="921.5" y="812.1" font-size="12" fill="#6a1a8a" textLength="41" lengthAdjust="spacingAndGlyphs" xml:space="preserve">Not fitted</text>
<text x="1017.4" y="777.6" font-size="11.5" fill="#000" textLength="40" lengthAdjust="spacingAndGlyphs" xml:space="preserve">Ph Corm</text>
<text x="1068.5" y="777.5" font-size="11.5" fill="#000" textLength="57" lengthAdjust="spacingAndGlyphs" xml:space="preserve">Minimum dia</text>
<text x="1144.5" y="778.4" font-size="11.5" fill="#000" textLength="60" lengthAdjust="spacingAndGlyphs" xml:space="preserve">Maximum dia</text>
<rect x="1019.5" y="781.5" width="38" height="17.5" fill="#f2f2f2" stroke="#e0e0e0"/>
<text x="1021" y="794" font-size="12" fill="#000" textLength="20.5" lengthAdjust="spacingAndGlyphs" xml:space="preserve">-32°</text>
<text x="1021.3" y="811.7" font-size="12" fill="#6a1a8a" textLength="10" lengthAdjust="spacingAndGlyphs" xml:space="preserve">0°</text>
<rect x="1066.2" y="782" width="37" height="18.4" fill="#fbb8c4" stroke="#eeeeee"/><rect x="1144" y="782" width="36.8" height="18.4" fill="#fbb8c4" stroke="#eeeeee"/>
<rect x="1106" y="781.6" width="29.3" height="22.5" rx="2" fill="#fff"/><rect x="1108" y="783.9" width="24.8" height="17.9" fill="#88ee22"/>
<text x="1112.9" y="796.7" font-size="12.5" fill="#000" textLength="14.6" lengthAdjust="spacingAndGlyphs" xml:space="preserve">Set</text>
<rect x="1184.3" y="781.6" width="28.8" height="22.5" rx="2" fill="#fff"/><rect x="1186.3" y="783.9" width="24.5" height="17.9" fill="#88ee22"/>
<text x="1191" y="796.7" font-size="12.5" fill="#000" textLength="14.6" lengthAdjust="spacingAndGlyphs" xml:space="preserve">Set</text>
<path d="M1067,809.5 h3 m2.3,0 h3 m2.3,0 h3 m2.3,0 h3 M1146,809.5 h3 m2.3,0 h3 m2.3,0 h3 m2.3,0 h3" stroke="#2a2a9a" stroke-width="1.2"/>
<text x="916" y="828.6" font-size="11.5" fill="#000" font-weight="bold" textLength="199" lengthAdjust="spacingAndGlyphs" xml:space="preserve">The SM fit has not been considered</text>
<text x="782.5" y="844" font-size="11.5" fill="#3c4a6a" textLength="53.5" lengthAdjust="spacingAndGlyphs" xml:space="preserve">Version info</text>
<text x="782.5" y="865.3" font-size="11.5" fill="#3c4a6a" textLength="54.7" lengthAdjust="spacingAndGlyphs" xml:space="preserve">Image scale</text>
<rect x="842.5" y="832.6" width="269" height="17.5" fill="#f4f4f4"/><path d="M842.5,850.5 H1111.5" stroke="#8a8a8a" stroke-width="1" fill="none"/>
<text x="844.9" y="844.9" font-size="11.5" fill="#000" textLength="53.5" lengthAdjust="spacingAndGlyphs" xml:space="preserve">2016-01-04</text>
<rect x="843.5" y="853" width="268" height="20" fill="#fff8cc"/>
<path d="M848.0,858.5 V861.5M854.4,858.5 V861.5M860.7,858.5 V861.5M867.0,858.5 V861.5M873.4,858.5 V861.5M879.8,858.5 V861.5M886.1,858.5 V861.5M892.5,858.5 V861.5M898.8,858.5 V861.5M905.1,858.5 V861.5M911.5,858.5 V861.5M917.9,858.5 V861.5M924.2,858.5 V861.5M930.5,858.5 V861.5M936.9,858.5 V861.5M943.2,858.5 V861.5M949.6,858.5 V861.5M956.0,858.5 V861.5M962.3,858.5 V861.5M968.6,858.5 V861.5M975.0,858.5 V861.5M981.4,858.5 V861.5M987.7,858.5 V861.5M994.0,858.5 V861.5M1000.4,858.5 V861.5M1006.8,858.5 V861.5M1013.1,858.5 V861.5M1019.5,858.5 V861.5M1025.8,858.5 V861.5M1032.2,858.5 V861.5M1038.5,858.5 V861.5M1044.8,858.5 V861.5M1051.2,858.5 V861.5M1057.5,858.5 V861.5M1063.9,858.5 V861.5M1070.2,858.5 V861.5M1076.6,858.5 V861.5M1083.0,858.5 V861.5M1089.3,858.5 V861.5M1095.7,858.5 V861.5M1102.0,858.5 V861.5M1108.3,858.5 V861.5" stroke="#a8a8a8" stroke-width="1" fill="none"/>
<rect x="848.5" y="869.5" width="260" height="3" fill="#e6e6e6" stroke="#cfcfcf" stroke-width="1"/>
<path d="M978,875 V867.5 L982.2,864 L986.4,867.5 V875 Z" fill="#0a6ad0"/>
<rect x="1122" y="834" width="96.5" height="42.5" rx="3" fill="#fff"/><rect x="1124.5" y="836.5" width="91.5" height="37.5" fill="#ffb8c6"/>
<text x="1170" y="852.5" font-size="12.5" fill="#a0102a" font-weight="bold" text-anchor="middle" xml:space="preserve">Save/Update</text>
<text x="1170" y="865.5" font-size="12.5" fill="#a0102a" font-weight="bold" text-anchor="middle" xml:space="preserve">model 987</text>
</g>
</svg>
</body></html>
